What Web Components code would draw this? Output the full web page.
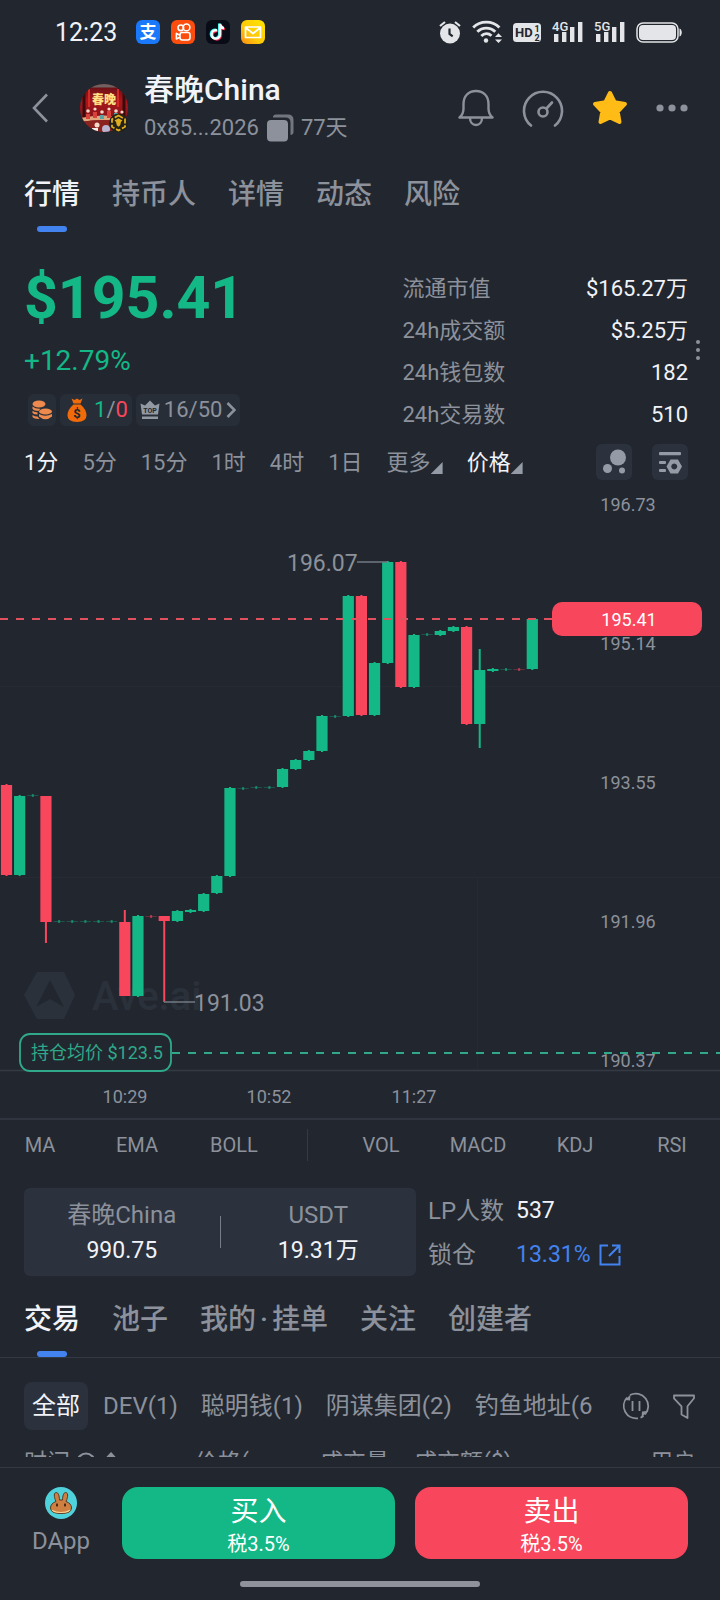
<!doctype html>
<html lang="zh-CN">
    <head>
        <meta charset="utf-8" />
        <title>春晚China</title>
        <meta name="viewport" content="width=device-width, initial-scale=1.0" />
        <style>
        :root {
            --color-background: #22272f;
            --color-panel: #2b323d;
            --color-chip: #282e38;
            --color-line: #343a44;
            --color-text: #f2f3f8;
            --color-muted: #8c919b;
            --color-up: #14b887;
            --color-down: #f8465d;
            --color-link: #4383f0;
            --gutter: 24px;
        }

        body {
            margin: 0;
            min-height: 100vh;
            display: flex;
            flex-direction: column;
            background-color: var(--color-background);
            color: var(--color-text);
            font-family: Roboto, "Noto Sans CJK SC", sans-serif;
            font-size: 22px;
        }

        .dot {
            margin: 0 4px;
        }
        </style>
    </head>
    <body>
        <status-bar></status-bar>
        <token-header name="春晚China" address="0x85...2026" age="77天"></token-header>
        <tab-bar>
            <tab-item selected>行情</tab-item>
            <tab-item>持币人</tab-item>
            <tab-item>详情</tab-item>
            <tab-item>动态</tab-item>
            <tab-item>风险</tab-item>
        </tab-bar>
        <price-summary>
            <span slot="price">$195.41</span>
            <span slot="change">+12.79%</span>
            <stat-row label="流通市值">$165.27万</stat-row>
            <stat-row label="24h成交额">$5.25万</stat-row>
            <stat-row label="24h钱包数">182</stat-row>
            <stat-row label="24h交易数">510</stat-row>
        </price-summary>
        <time-frames></time-frames>
        <price-chart></price-chart>
        <indicator-row></indicator-row>
        <pool-info></pool-info>
        <tab-bar lined>
            <tab-item selected>交易</tab-item>
            <tab-item>池子</tab-item>
            <tab-item>我的<span class="dot">·</span>挂单</tab-item>
            <tab-item>关注</tab-item>
            <tab-item>创建者</tab-item>
        </tab-bar>
        <filter-bar></filter-bar>
        <trade-list></trade-list>
        <action-bar>
            <trade-button kind="up" note="税3.5%">买入</trade-button>
            <trade-button kind="down" note="税3.5%">卖出</trade-button>
        </action-bar>

        <template id="template-status-bar">
            <time>12:23</time>
            <div class="group apps">
                <svg width="24" height="24" viewBox="0 0 24 24">
                    <rect width="24" height="24" rx="6" fill="#1a78fb" />
                    <text x="12" y="18" text-anchor="middle" font-size="17" font-weight="700" fill="#fff">支</text>
                </svg>
                <svg width="24" height="24" viewBox="0 0 24 24">
                    <rect width="24" height="24" rx="6" fill="#fb4d0d" />
                    <g fill="none" stroke="#fff" stroke-width="1.6">
                        <circle cx="9.8" cy="7.800" r="2.800" />
                        <circle cx="15.5" cy="7.4" r="3.4" />
                        <rect x="9" y="12.5" width="10" height="7.5" rx="2.2" />
                        <path d="M9 15.2L5.4 13.4V19L9 17.3" stroke-linejoin="round" />
                    </g>
                </svg>
                <svg width="24" height="24" viewBox="0 0 24 24">
                    <rect width="24" height="24" rx="6" fill="#090b16" />
                    <g fill="none" stroke-width="2.4">
                        <path d="M11 10.400a4.200 4.200 0 1 0 3 4V4c.3 2.600 2 4 4 4.300" stroke="#fb2c55" transform="translate(.9 .8)" />
                        <path d="M11 10.400a4.200 4.200 0 1 0 3 4V4c.3 2.600 2 4 4 4.300" stroke="#25f4ee" transform="translate(-.8 -.5)" />
                        <path d="M11 10.400a4.200 4.200 0 1 0 3 4V4c.3 2.600 2 4 4 4.300" stroke="#fff" />
                    </g>
                </svg>
                <svg width="24" height="24" viewBox="0 0 24 24">
                    <defs>
                        <linearGradient id="mail" x1="1" y1="0" x2="0" y2="1">
                            <stop offset="0" stop-color="#ffe600" />
                            <stop offset=".6" stop-color="#fdc80a" />
                            <stop offset="1" stop-color="#fb8a12" />
                        </linearGradient>
                    </defs>
                    <rect width="24" height="24" rx="6" fill="url(#mail)" />
                    <path d="M4.500 7h15v10.500h-15zM4.500 7.500l7.500 6 7.500-6" fill="none" stroke="#fff" stroke-width="1.700" stroke-linejoin="round" />
                </svg>
            </div>
            <div class="group signals">
                <svg width="22" height="24" viewBox="0 0 22 24">
                    <circle cx="11" cy="13.500" r="10" fill="#e3e5e8" />
                    <path d="M1 6l5-4M21 6l-5-4" stroke="#e3e5e8" stroke-width="2.200" />
                    <path d="M10.500 8.500v5.500l3.200 2.400" fill="none" stroke="#22272f" stroke-width="2.200" />
                </svg>
                <svg width="30" height="24" viewBox="0 0 30 24">
                    <g fill="none" stroke="#e3e5e8" stroke-width="2.800">
                        <path d="M1.200 7.500c7-7.200 19.200-7.200 26.200 0" />
                        <path d="M5.300 11.800c5-5 13-5 18 0" />
                        <path d="M9.300 16c3-3 7.200-3 10.200-.2" />
                    </g>
                    <circle cx="14" cy="20.500" r="2.200" fill="#e3e5e8" />
                    <path d="M23 17l3.500-3.800L30 17zM23 19.500h7L26.500 23z" fill="#e3e5e8" />
                </svg>
                <svg width="28" height="24" viewBox="0 0 28 24">
                    <rect y="3" width="28" height="19" rx="3.500" fill="#e3e5e8" />
                    <text x="2" y="17" font-size="13" font-weight="700" fill="#22272f">HD</text>
                    <text x="24" y="12" text-anchor="middle" font-size="9" font-weight="700" fill="#22272f">1</text>
                    <text x="24" y="20.500" text-anchor="middle" font-size="9" font-weight="700" fill="#22272f">2</text>
                </svg>
                <svg width="31" height="24" viewBox="0 0 31 24">
                    <path d="M2 14h4.400v8H2zM10 12h4.400v10H10zM18 7h4.400v15H18zM26 2h4.400v20H26z" fill="#e3e5e8" />
                    <text x="0" y="10.500" font-size="13" font-weight="500" fill="#e3e5e8">4G</text>
                </svg>
                <svg width="31" height="24" viewBox="0 0 31 24">
                    <path d="M2 14h4.400v8H2zM10 12h4.400v10H10zM18 7h4.400v15H18zM26 2h4.400v20H26z" fill="#e3e5e8" />
                    <text x="0" y="10.500" font-size="13" font-weight="500" fill="#e3e5e8">5G</text>
                </svg>
                <svg width="46" height="24" viewBox="0 0 46 24">
                    <rect x="1" y="3" width="41" height="19" rx="6" fill="none" stroke="#e3e5e8" stroke-width="1.500" />
                    <rect x="3" y="5" width="37" height="15" rx="4" fill="#e3e5e8" />
                    <path d="M43.500 8.500c3 1 3 7 0 8z" fill="#e3e5e8" />
                </svg>
            </div>

            <style>
            :host {
                display: flex;
                align-items: center;
                height: 64px;
                padding: 0 38px 0 55px;
            }

            time {
                font-size: 25px;
                font-weight: 400;
            }

            .group {
                display: flex;
                align-items: center;
                gap: 11px;
            }

            .apps {
                margin-left: 19px;
            }

            .signals {
                margin-left: auto;
            }
            </style>
        </template>

        <template id="template-token-header">
            <button aria-label="返回">
                <svg width="16" height="30" viewBox="0 0 16 30">
                    <path d="M15 1.500L2 15l13 13.500" fill="none" stroke="currentColor" stroke-width="2.600" />
                </svg>
            </button>
            <svg class="avatar" width="48" height="48" viewBox="0 0 48 48">
                <defs>
                    <clipPath id="round"><circle cx="24" cy="24" r="24" /></clipPath>
                    <linearGradient id="stage" x1="0" y1="0" x2="0" y2="1">
                        <stop offset="0" stop-color="#5d1014" />
                        <stop offset=".35" stop-color="#a8161c" />
                        <stop offset="1" stop-color="#6d1518" />
                    </linearGradient>
                </defs>
                <g clip-path="url(#round)">
                    <rect width="48" height="48" fill="url(#stage)" />
                    <path d="M0 0h48v3.500H0z" fill="#6f6260" />
                    <path d="M4 8v26M44 8v26" stroke="#3a0a0c" stroke-width="3" />
                    <path d="M9 5v18M38 5v18" stroke="#d42a25" stroke-width="2" />
                    <path d="M0 34q24-5 48 0v4q-24-4-48 0z" fill="#e0a67c" />
                    <path d="M0 38q24-4 48 0v10H0z" fill="#8a2320" />
                    <g fill="#f4d9c8">
                        <circle cx="8" cy="27" r="1.800" /><circle cx="15" cy="25" r="1.600" />
                        <circle cx="22" cy="28" r="1.800" /><circle cx="29" cy="25" r="1.600" />
                        <circle cx="36" cy="27" r="1.800" /><circle cx="42" cy="28" r="1.600" />
                        <circle cx="17" cy="41" r="2.500" />
                    </g>
                    <g fill="#d8423a">
                        <path d="M6 30h4v5H6zM13 28h4v6h-4zM27 27h4v7h-4zM40 31h4v5h-4z" />
                    </g>
                    <path d="M20 31h4v4h-4zM34 29h4v5h-4z" fill="#56a3a8" />
                    <circle cx="26" cy="45" r="4" fill="#b9b4cf" />
                    <path d="M12 44h6v4h-6z" fill="#f1efe8" />
                </g>
                <text x="24" y="19.500" text-anchor="middle" font-size="12" font-weight="900" fill="#ffe082">春晚</text>
                <circle cx="38.500" cy="39" r="9.500" fill="#24211a" />
                <path d="M38.500 31.500l6.500 3.700v7.600l-6.500 3.700-6.500-3.700v-7.600z" fill="none" stroke="#e0ae1c" stroke-width="1.800" stroke-dasharray="5 1.800" />
                <path d="M34.500 36.500l4-2.200 4 2.200-1.500 1.200-.8 3.500-1.700 1.500-1.700-1.500-.8-3.500z" fill="#e0ae1c" />
            </svg>
            <div id="names">
                <div id="name"></div>
                <div id="meta">
                    <span id="address"></span>
                    <svg width="28" height="28" viewBox="0 0 28 28" role="img" aria-label="复制">
                        <path d="M7 2.500Q7.500.5 10 .5h12q5.500 0 5.500 5.500v12q0 2.500-3 3V8.500q0-5-5-5H7z" fill="currentColor" opacity=".75" />
                        <rect x="1" y="6" width="21" height="21.500" rx="4" fill="currentColor" />
                    </svg>
                    <span id="age"></span>
                </div>
            </div>
            <div id="tools">
                <button aria-label="提醒">
                    <svg width="36" height="38" viewBox="0 0 36 38">
                        <g fill="none" stroke="currentColor" stroke-width="2.400" stroke-linejoin="round">
                            <path d="M1.500 28.500c3-2.500 4-5.500 4-9V15C5.500 7 10.500 2 18 2s12.500 5 12.500 13v4.500c0 3.500 1 6.500 4 9z" />
                            <path d="M12 29c0 4 2.500 7 6 7s6-3 6-7" />
                        </g>
                    </svg>
                </button>
                <button aria-label="燃料">
                    <svg width="42" height="38" viewBox="0 0 42 38">
                        <g fill="none" stroke="currentColor" stroke-width="2.600" stroke-linecap="round">
                            <path d="M9 36.500A19 19 0 1 1 33 36.500" />
                            <circle cx="21" cy="23" r="4.500" />
                            <path d="M24.500 19.500l5.500-6" />
                        </g>
                    </svg>
                </button>
                <button aria-label="收藏">
                    <svg width="36" height="36" viewBox="0 0 36 36">
                        <path d="M18 3l4.600 9.200 10.400 1.700-7.300 7.600L27.500 32 18 27.500 8.500 32l1.800-10.500L3 13.900l10.400-1.700z" fill="#ffbb16" stroke="#ffbb16" stroke-width="4" stroke-linejoin="round" />
                    </svg>
                </button>
                <button aria-label="更多">
                    <svg width="32" height="8" viewBox="0 0 32 8" fill="currentColor">
                        <circle cx="4" cy="4" r="3.600" /><circle cx="16" cy="4" r="3.600" /><circle cx="28" cy="4" r="3.600" />
                    </svg>
                </button>
            </div>

            <style>
            :host {
                display: flex;
                align-items: center;
                height: 88px;
                padding: 0 32px;
                color: var(--color-muted);
            }

            button {
                display: flex;
                padding: 0;
                border: none;
                background: none;
                color: inherit;
            }

            .avatar {
                margin-left: 32px;
            }

            #names {
                margin-left: 16px;
            }

            #name {
                font-size: 30px;
                font-weight: 500;
                line-height: 40px;
                color: var(--color-text);
            }

            #meta {
                display: flex;
                align-items: center;
                gap: 7px;
                line-height: 36px;
            }

            #tools {
                display: flex;
                align-items: center;
                gap: 28px;
                margin-left: auto;
            }
            </style>
        </template>

        <template id="template-tab-bar">
            <slot></slot>

            <style>
            :host {
                display: flex;
                gap: 32px;
                padding: 22px var(--gutter) 0;
            }

            :host([lined]) {
                border-bottom: 1px solid var(--color-line);
            }
            </style>
        </template>

        <template id="template-tab-item">
            <button role="tab"><span><slot></slot></span></button>

            <style>
            :host {
                display: block;
            }

            button {
                display: flex;
                flex-direction: column;
                align-items: center;
                gap: 10px;
                padding: 0;
                border: none;
                background: none;
                color: var(--color-muted);
                font: 500 28px/42px Roboto, "Noto Sans CJK SC", sans-serif;
                white-space: nowrap;
            }

            button::after {
                content: "";
                width: 30px;
                height: 6px;
                border-radius: 3px;
            }

            :host([selected]) button {
                color: var(--color-text);
            }

            :host([selected]) button::after {
                background-color: var(--color-link);
            }
            </style>
        </template>

        <template id="template-price-summary">
            <div id="left">
                <div id="price"><slot name="price"></slot></div>
                <div id="change"><slot name="change"></slot></div>
                <div id="chips">
                    <span class="chip">
                        <svg width="20" height="20" viewBox="0 0 20 20">
                            <g fill="#ee8a4e">
                                <ellipse cx="7" cy="4" rx="6.500" ry="3.500" />
                                <path d="M.5 6.500q3 2.600 8 2.200l-2 2.300Q2 11 .5 8.800zM.5 10.800q2.500 1.700 5 1.500v2.200Q2 14.500.5 13zM.5 15q2.500 1.700 5 1.500l2 2.400Q2 19 .5 17z" />
                                <ellipse cx="13.500" cy="11.500" rx="6.500" ry="3" />
                                <path d="M7 14q6 3.500 13 0v2.500q-6.500 5.500-13 0z" />
                            </g>
                        </svg>
                    </span>
                    <span class="chip bag">
                        <svg width="20" height="24" viewBox="0 0 20 24">
                            <path d="M4.500.5l3 1.500L10 .5l2.500 1.500 3-1.500-2 5h-7zM6.500 6.500h7q6 5 6 11 0 6.500-9.500 6.500T.5 17.500q0-6 6-11z" fill="#f26b0a" />
                            <text x="10" y="20" text-anchor="middle" font-size="13" font-weight="700" fill="#22272f">$</text>
                        </svg>
                        <span class="ratio"><b class="up">1</b>/<b class="down">0</b></span>
                    </span>
                    <span class="chip">
                        <svg width="20" height="20" viewBox="0 0 20 20">
                            <path d="M.5 3.500l4.500 2 5-5 5 5 4.500-2-1.500 11H2z" fill="#9399a3" />
                            <path d="M2 16.500h16v2.500H2z" fill="#9399a3" />
                            <text x="10" y="12.500" text-anchor="middle" font-size="7" font-weight="700" fill="#22272f">TOP</text>
                        </svg>
                        <span>16/50</span>
                        <svg width="10" height="16" viewBox="0 0 10 16">
                            <path d="M1.500 1l7 7-7 7" fill="none" stroke="currentColor" stroke-width="2.600" />
                        </svg>
                    </span>
                </div>
            </div>
            <div id="stats"><slot></slot></div>
            <svg id="more" width="4" height="20" viewBox="0 0 4 20" fill="#8c919b">
                <circle cx="2" cy="2" r="2" /><circle cx="2" cy="10" r="2" /><circle cx="2" cy="18" r="2" />
            </svg>

            <style>
            :host {
                position: relative;
                display: flex;
                justify-content: space-between;
                padding: 36px 32px 0 var(--gutter);
            }

            #left {
                display: flex;
                flex-direction: column;
                gap: 15px;
            }

            #price {
                font-size: 59px;
                font-weight: 700;
                line-height: 60px;
                color: var(--color-up);
            }

            #change {
                font-size: 28px;
                line-height: 36px;
                color: var(--color-up);
            }

            #chips {
                display: flex;
                gap: 4px;
                margin-left: 4px;
                color: var(--color-muted);
                line-height: 32px;
            }

            .chip {
                display: flex;
                align-items: center;
                gap: 4px;
                height: 32px;
                padding: 0 4px;
                border-radius: 6px;
                background-color: var(--color-chip);
            }

            .bag {
                padding-left: 7px;
            }

            .ratio {
                padding-left: 3px;
            }

            b {
                font-weight: 400;
            }

            .up {
                color: var(--color-up);
            }

            .down {
                color: var(--color-down);
            }

            #stats {
                width: 43%;
            }

            #more {
                position: absolute;
                right: 20px;
                top: 108px;
            }
            </style>
        </template>

        <template id="template-stat-row">
            <span id="label"></span>
            <slot></slot>

            <style>
            :host {
                display: flex;
                justify-content: space-between;
                line-height: 42px;
            }

            #label {
                color: var(--color-muted);
            }
            </style>
        </template>

        <template id="template-time-frames">
            <button class="selected">1分</button>
            <button>5分</button>
            <button>15分</button>
            <button>1时</button>
            <button>4时</button>
            <button>1日</button>
            <button class="drop" aria-haspopup="menu">更多</button>
            <button class="drop selected" aria-haspopup="menu">价格</button>
            <div id="tools">
                <button class="tool" aria-label="气泡图">
                    <svg width="26" height="26" viewBox="0 0 26 26" fill="#959ba6">
                        <circle cx="17" cy="8.500" r="8" /><circle cx="6.500" cy="19.500" r="4.500" /><circle cx="21" cy="21.500" r="3" />
                    </svg>
                </button>
                <button class="tool" aria-label="图表设置">
                    <svg width="24" height="24" viewBox="0 0 24 24" fill="#959ba6">
                        <rect x="1" y="2" width="22" height="3.200" rx="1" />
                        <rect x="1" y="11" width="7" height="3" rx="1" />
                        <rect x="1" y="19" width="7" height="3" rx="1" />
                        <path fill-rule="evenodd" d="M12.500 9.500h7.500l4 7-4 7h-7.500l-4-7zM16.200 13.500a3 3 0 1 0 .1 0z" />
                    </svg>
                </button>
            </div>

            <style>
            :host {
                display: flex;
                align-items: center;
                gap: 24px;
                padding: 8px 32px 0 var(--gutter);
            }

            button {
                padding: 2px 0 0;
                border: none;
                background: none;
                color: var(--color-muted);
                font: inherit;
                line-height: 34px;
                white-space: nowrap;
            }

            .selected {
                color: var(--color-text);
            }

            .drop {
                display: flex;
                align-items: center;
            }

            .drop::after {
                content: "";
                width: 12px;
                height: 12px;
                margin-top: 10px;
                background-color: #959ba6;
                clip-path: polygon(100% 0, 100% 100%, 0 100%);
            }

            #tools {
                display: flex;
                gap: 20px;
                margin-left: auto;
            }

            .tool {
                display: flex;
                align-items: center;
                justify-content: center;
                width: 36px;
                height: 36px;
                padding: 0;
                border-radius: 6px;
                background-color: var(--color-panel);
            }
            </style>
        </template>

        <template id="template-price-chart">
            <svg id="chart" viewBox="0 480 720 640">
                <g stroke="#252a33">
                    <path d="M0 686.500H720M0 877.500H720M477.500 877V1070" />
                </g>
                <g fill="#2b313a">
                    <path fill-rule="evenodd" d="M37 972h27l11 23-11 24H37l-13-24zM50 980l-14 27 14-8 14 8z" />
                    <text x="92" y="1010" font-size="40" font-weight="500">Ave.ai</text>
                </g>
                <g id="prices" class="axis"></g>
                <g id="candles"></g>
                <path d="M0 619H552" stroke="#e0505f" stroke-width="2" stroke-dasharray="8 8" />
                <path d="M172 1053H720" stroke="#2fa98a" stroke-width="2" stroke-dasharray="8 8" />
                <path d="M357 562H387M164 1002H195" stroke="#737983" stroke-width="1.500" />
                <g class="mark">
                    <text x="287" y="571">196.07</text>
                    <text x="194" y="1011">191.03</text>
                </g>
                <rect x="552" y="602" width="150" height="34" rx="10" fill="#f8465d" />
                <text x="629" y="626" text-anchor="middle" font-size="18" fill="#fff">195.41</text>
                <path d="M0 1070.500H720M0 1119H720" stroke="#343a44" stroke-width="1.500" />
                <rect x="20" y="1034" width="151" height="37" rx="10" fill="#22272f" stroke="#2fa98a" stroke-width="1.800" />
                <text x="31" y="1059" font-size="18" fill="#2fa98a">持仓均价 $123.5</text>
                <g id="times" class="axis"></g>
            </svg>

            <style>
            :host {
                display: block;
            }

            #chart {
                display: block;
                width: 100%;
            }

            .axis {
                font-size: 18px;
                fill: #8c919b;
                text-anchor: middle;
            }

            .mark {
                font-size: 23px;
                fill: #8c919b;
            }
            </style>
        </template>

        <template id="template-indicator-row">
            <button>MA</button>
            <button>EMA</button>
            <button>BOLL</button>
            <i></i>
            <button>VOL</button>
            <button>MACD</button>
            <button>KDJ</button>
            <button>RSI</button>

            <style>
            :host {
                display: flex;
                align-items: center;
                justify-content: space-between;
                height: 50px;
                padding: 0 24px 0 16px;
            }

            button {
                display: flex;
                justify-content: center;
                width: 48px;
                padding: 0;
                border: none;
                background: none;
                color: var(--color-muted);
                font: inherit;
                font-size: 20px;
            }

            i {
                width: 1px;
                height: 32px;
                background-color: var(--color-line);
            }
            </style>
        </template>

        <template id="template-pool-info">
            <div id="pair">
                <div class="side"><span>春晚China</span><b>990.75</b></div>
                <i></i>
                <div class="side"><span>USDT</span><b>19.31万</b></div>
            </div>
            <dl>
                <dt>LP人数</dt>
                <dd>537</dd>
                <dt>锁仓</dt>
                <dd>
                    <a href="#lock">13.31%
                        <svg width="22" height="22" viewBox="0 0 22 22">
                            <path d="M9 1.500H1.500v19h19V12M13 1.500h7.500V9M20 2L10 12" fill="none" stroke="currentColor" stroke-width="2" />
                        </svg>
                    </a>
                </dd>
            </dl>

            <style>
            :host {
                display: flex;
                gap: 12px;
                padding: 18px var(--gutter) 0;
                font-size: 23px;
            }

            #pair {
                display: flex;
                align-items: center;
                flex: 0 0 392px;
                height: 88px;
                border-radius: 6px;
                background-color: var(--color-panel);
            }

            .side {
                display: flex;
                flex: 1;
                flex-direction: column;
                align-items: center;
                padding-top: 2px;
                line-height: 36px;
            }

            span, dt {
                color: var(--color-muted);
                font-size: 24px;
            }

            b {
                font-weight: 400;
            }

            i {
                width: 1px;
                height: 32px;
                background-color: #777d88;
            }

            dl {
                display: grid;
                grid-template-columns: 88px auto;
                margin: 0;
                padding-top: 1px;
                line-height: 44px;
            }

            dd {
                margin: 0;
            }

            a {
                display: flex;
                align-items: center;
                gap: 8px;
                color: var(--color-link);
                text-decoration: none;
            }
            </style>
        </template>

        <template id="template-filter-bar">
            <div id="filters">
                <button class="selected">全部</button>
                <button>DEV(1)</button>
                <button>聪明钱(1)</button>
                <button>阴谋集团(2)</button>
                <button>钓鱼地址(6</button>
            </div>
            <button class="icon" aria-label="暂停刷新">
                <svg width="28" height="28" viewBox="0 0 28 28">
                    <g fill="none" stroke="currentColor" stroke-width="1.800">
                        <path d="M5 5.500A12.500 12.500 0 0 0 16 26.300" />
                        <path d="M8 3A12.500 12.500 0 0 1 23 22.500" />
                        <path d="M18.500 25.700q1.500-.5 3-1.700" />
                        <path d="M10.500 9v10M17.500 9v10" />
                    </g>
                    <path d="M3 8l5.500-5.500L8 8.500zM26 19l-6.500 6.500.5-6z" fill="currentColor" />
                </svg>
            </button>
            <button class="icon" aria-label="筛选">
                <svg width="24" height="28" viewBox="0 0 24 28">
                    <path d="M2 3.500h20v2.800l-6.500 8V26l-6-3.500v-8.200L2 6.300z" fill="none" stroke="currentColor" stroke-width="1.800" stroke-linejoin="round" />
                </svg>
            </button>

            <style>
            :host {
                display: flex;
                align-items: center;
                gap: 22px;
                padding: 24px var(--gutter) 0;
            }

            #filters {
                display: flex;
                flex: 1;
                gap: 7px;
                margin-right: 8px;
                overflow: hidden;
            }

            button {
                flex-shrink: 0;
                height: 48px;
                padding: 0 8px;
                border: none;
                border-radius: 8px;
                background: none;
                color: var(--color-muted);
                font: inherit;
                font-size: 24px;
                line-height: 48px;
                white-space: nowrap;
            }

            .selected {
                background-color: var(--color-panel);
                color: var(--color-text);
            }

            .icon {
                display: flex;
                align-items: center;
                padding: 0;
            }
            </style>
        </template>

        <template id="template-trade-list">
            <table>
                <colgroup><col width="171" /><col width="125" /><col width="94" /><col /><col /></colgroup>
                <tr>
                    <th>时间
                        <svg width="44" height="22" viewBox="0 0 44 22">
                            <circle cx="10" cy="12" r="8.500" fill="none" stroke="currentColor" stroke-width="2.200" />
                            <path d="M6 8.500h8M35 3l5 5.500h-10z" fill="currentColor" stroke="currentColor" stroke-width="1.500" />
                        </svg>
                    </th>
                    <th>价格(</th>
                    <th>成交量</th>
                    <th>成交额($)</th>
                    <th class="end">用户</th>
                </tr>
            </table>

            <style>
            :host {
                display: block;
                height: 11px;
                margin: 16px var(--gutter) 10px;
                overflow: hidden;
            }

            table {
                width: 100%;
                table-layout: fixed;
                border-spacing: 0;
                color: var(--color-muted);
                font-size: 23px;
            }

            th {
                padding: 0;
                font-weight: 400;
                line-height: 34px;
                text-align: left;
                white-space: nowrap;
            }

            svg {
                vertical-align: -2px;
            }

            .end {
                text-align: right;
            }
            </style>
        </template>

        <template id="template-action-bar">
            <nav>
                <a href="#dapp">
                    <svg width="32" height="32" viewBox="0 0 32 32">
                        <circle cx="16" cy="16" r="16" fill="#50d2dc" />
                        <path d="M11 14.500C8.500 9 9 5.500 11.200 5.500S14.300 9 14.500 13h3c.2-4 1-7.500 3.200-7.500S23.500 9 21 14.500q5.500 2 5.500 6.500 0 5.500-10.500 5.500T5.500 21q0-4.500 5.500-6.500z" fill="#ce7f42" stroke="#593a20" stroke-width="1" />
                        <path d="M6.500 22.500q9.500 5 19 0-1 3.500-9.500 3.500t-9.500-3.500z" fill="#f8d79a" />
                        <ellipse cx="12" cy="18" rx="1" ry="1.800" fill="#42220d" />
                        <ellipse cx="20" cy="18" rx="1" ry="1.800" fill="#42220d" />
                    </svg>
                    DApp
                </a>
                <slot></slot>
            </nav>
            <div id="home"></div>

            <style>
            :host {
                display: block;
                padding-bottom: 14px;
                border-top: 1px solid var(--color-line);
            }

            nav {
                display: flex;
                gap: 20px;
                padding: 19px 32px 22px;
            }

            a {
                display: flex;
                flex-direction: column;
                align-items: center;
                gap: 6px;
                width: 58px;
                margin-right: 12px;
                color: var(--color-muted);
                font-size: 24px;
                line-height: 32px;
                text-decoration: none;
            }

            #home {
                width: 240px;
                height: 6px;
                margin: 0 auto;
                border-radius: 3px;
                background-color: #8f929b;
            }
            </style>
        </template>

        <template id="template-trade-button">
            <button>
                <slot></slot>
                <small id="note"></small>
            </button>

            <style>
            :host {
                display: block;
                flex: 1;
            }

            button {
                display: flex;
                flex-direction: column;
                align-items: center;
                justify-content: center;
                width: 100%;
                height: 72px;
                padding: 6px 0 0;
                border: none;
                border-radius: 16px;
                background-color: var(--color-up);
                color: #fff;
                font: inherit;
                font-size: 28px;
                line-height: 36px;
            }

            :host([kind="down"]) button {
                background-color: var(--color-down);
            }

            small {
                font-size: 20px;
                line-height: 28px;
            }
            </style>
        </template>

        <script>
            class TemplateElement extends HTMLElement {
                constructor() {
                    super()

                    const template = document.querySelector(`#template-${this.localName}`)
                    this.root = this.attachShadow({ mode: "open" })
                    this.root.appendChild(template.content.cloneNode(true))
                }

                // every observed attribute fills the element with the same id
                attributeChangedCallback(name, oldValue, newValue) {
                    this.root.querySelector(`#${name}`).textContent = newValue
                }
            }

            class TokenHeader extends TemplateElement {
                static observedAttributes = [ "name", "address", "age" ]
            }

            class StatRow extends TemplateElement {
                static observedAttributes = [ "label" ]
            }

            class TradeButton extends TemplateElement {
                static observedAttributes = [ "note" ]
            }

            // slot, colour, body top, body bottom, wick top, wick bottom
            const CANDLES = [
                [0, "d", 785, 875], [1, "u", 796, 875], [2, "u", 795, 796], [3, "d", 796, 922, 796, 943],
                [4, "u", 921, 922], [5, "u", 921, 922], [6, "u", 921, 922], [7, "u", 921, 922], [8, "u", 921, 922],
                [9, "d", 922, 996, 910, 996], [10, "u", 916, 996], [11, "d", 916, 917], [12, "d", 916, 921, 916, 1002],
                [13, "u", 911, 921], [14, "u", 910, 912], [15, "u", 894, 911], [16, "u", 876, 893], [17, "u", 788, 876],
                [18, "u", 788, 789], [19, "u", 787, 788], [20, "u", 787, 788], [21, "u", 769, 787],
                [22, "u", 760, 769], [23, "u", 751, 760], [24, "u", 716, 751], [25, "u", 716, 717],
                [26, "u", 596, 716], [27, "d", 596, 715], [28, "u", 663, 715], [29, "u", 562, 663],
                [30, "d", 562, 687], [31, "u", 635, 687], [32, "u", 634, 635], [33, "u", 631, 635],
                [34, "u", 627, 631], [35, "d", 627, 724], [36, "u", 670, 724, 649, 748], [37, "u", 669, 671],
                [38, "u", 669, 670], [39, "d", 669, 670], [40, "u", 619, 669],
            ]
            const PRICES = [["196.73", 504], ["195.14", 643], ["193.55", 782], ["191.96", 921], ["190.37", 1060]]
            const TIMES = [["10:29", 125], ["10:52", 269], ["11:27", 414]]

            class PriceChart extends TemplateElement {
                connectedCallback() {
                    this.root.querySelector("#candles").innerHTML = CANDLES.map(([slot, side, top, bottom, high = top - 1, low = bottom + 1]) => {
                        const x = 6.5 + slot * 13.145
                        const color = side == "u" ? "#14b887" : "#f8465d"
                        const flat = bottom - top <= 1
                        return `<g fill="${color}">
                            <rect x="${x - 1}" y="${high}" width="2" height="${low - high}" opacity="${flat ? 0.6 : 1}" />
                            <rect x="${x - 5.6}" y="${top}" width="11.2" height="${bottom - top}" opacity="${flat ? 0.3 : 1}" />
                        </g>`
                    }).join("")
                    this.root.querySelector("#prices").innerHTML = PRICES.map(([text, y]) => `<text x="628" y="${y + 7}">${text}</text>`).join("")
                    this.root.querySelector("#times").innerHTML = TIMES.map(([text, x]) => `<text x="${x}" y="1103">${text}</text>`).join("")
                }
            }

            customElements.define("status-bar", class extends TemplateElement {})
            customElements.define("token-header", TokenHeader)
            customElements.define("tab-bar", class extends TemplateElement {})
            customElements.define("tab-item", class extends TemplateElement {})
            customElements.define("price-summary", class extends TemplateElement {})
            customElements.define("stat-row", StatRow)
            customElements.define("time-frames", class extends TemplateElement {})
            customElements.define("price-chart", PriceChart)
            customElements.define("indicator-row", class extends TemplateElement {})
            customElements.define("pool-info", class extends TemplateElement {})
            customElements.define("filter-bar", class extends TemplateElement {})
            customElements.define("trade-list", class extends TemplateElement {})
            customElements.define("action-bar", class extends TemplateElement {})
            customElements.define("trade-button", TradeButton)
        </script>
    </body>
</html>
